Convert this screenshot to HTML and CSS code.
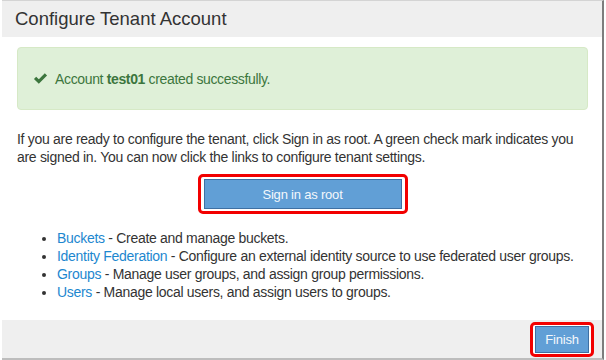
FILE: index.html
```html
<!DOCTYPE html>
<html>

<head>
    <title>Configure Tenant Account</title>
    <meta name="viewport" content="width=device-width, initial-scale=1">
    <link rel="stylesheet" href="styles.css">
</head>

<body>
    <div class="modal">
        <div class="modal-header">
            <h1>Configure Tenant Account</h1>
        </div>

        <div class="modal-body">
            <div class="alert-success">
                <svg class="check" viewBox="0 0 16 16" width="15" height="15">
                    <path d="M1 8.4 L3.4 6 L6.2 8.8 L12.6 2.4 L15 4.8 L6.2 13.6 Z" fill="#3c763d"/>
                </svg>
                <span>Account <b>test01</b> created successfully.</span>
            </div>

            <p class="intro">
                If you are ready to configure the tenant, click Sign in as root. A green check mark indicates you
                are signed in. You can now click the links to configure tenant settings.
            </p>

            <div class="action-row">
                <span class="highlight">
                    <button class="btn btn-wide">Sign in as root</button>
                </span>
            </div>

            <ul class="links">
                <li><a href="#">Buckets</a> - Create and manage buckets.</li>
                <li><a href="#">Identity Federation</a> - Configure an external identity source to use federated user groups.</li>
                <li><a href="#">Groups</a> - Manage user groups, and assign group permissions.</li>
                <li><a href="#">Users</a> - Manage local users, and assign users to groups.</li>
            </ul>
        </div>

        <div class="modal-footer">
            <span class="highlight">
                <button class="btn">Finish</button>
            </span>
        </div>
    </div>
</body>

</html>
```

FILE: styles.css
```css
* {
    box-sizing: border-box;
    margin: 0;
    padding: 0;
}

body {
    font-family: "Liberation Sans", Arial, sans-serif;
    background: #ffffff;
    color: #333;
}

.modal {
    width: 602px;
    margin-left: 2px;
    border-top: 1px solid #d4d4d4;
    border-right: 2px solid #7d7d7d;
    border-bottom: 2px solid #bdbdbd;
    background: #fff;
}

.modal-header {
    background: #efefef;
    height: 36px;
    padding: 0 13px;
    display: flex;
    align-items: center;
}

.modal-header h1 {
    font-size: 18.5px;
    font-weight: normal;
    color: #333;
}

.modal-body {
    padding: 10px 14px 19px 15px;
}

.alert-success {
    background: #dff0d8;
    border: 1px solid #d6e9c6;
    border-radius: 4px;
    color: #3c763d;
    font-size: 14px;
    letter-spacing: -0.35px;
    height: 63px;
    padding: 0 15px;
    display: flex;
    align-items: center;
    gap: 7px;
}

.alert-success b {
    font-weight: bold;
}

.intro {
    margin-top: 20px;
    font-size: 14px;
    letter-spacing: -0.3px;
    line-height: 18px;
    color: #333;
}

.action-row {
    margin-top: 8px;
    display: flex;
    justify-content: center;
}

.highlight {
    display: inline-flex;
    border: 3px solid #f20000;
    border-radius: 5px;
    padding: 2px 3px;
    background: #fff;
}

.btn {
    font-family: inherit;
    font-size: 13px;
    letter-spacing: -0.2px;
    color: #f4f8fc;
    background: #619fd6;
    border: 1px solid #3e70a3;
    height: 30px;
    padding: 0 14px;
}

.btn-wide {
    width: 198px;
}

.links {
    margin-top: 15px;
    padding-left: 40px;
    font-size: 14px;
    letter-spacing: -0.3px;
    line-height: 18px;
}

.links a {
    color: #1d87cf;
    text-decoration: none;
}

.modal-footer {
    background: #efefef;
    height: 38px;
    display: flex;
    justify-content: flex-end;
    align-items: center;
    padding-right: 8px;
}

.modal-footer .highlight {
    padding: 1px 2px;
}

.modal-footer .btn {
    height: 27px;
    width: 54px;
    padding: 0;
    font-size: 13px;
}
```
